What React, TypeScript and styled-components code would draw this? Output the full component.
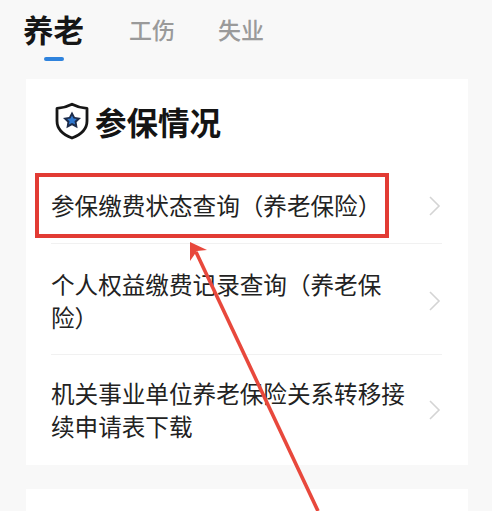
import React from 'react';
import styled, { createGlobalStyle } from 'styled-components';

const GlobalStyle = createGlobalStyle`
  html, body {
    margin: 0;
    padding: 0;
    background: #f8f8f8;
  }
  body {
    font-family: "Noto Sans CJK SC", "Noto Sans", sans-serif;
  }
`;

const Page = styled.div`
  position: relative;
  width: 492px;
  height: 511px;
  overflow: hidden;
  background: #f8f8f8;
  display: flex;
  flex-direction: column;
`;

const Tabs = styled.nav`
  display: flex;
  align-items: flex-start;
  height: 79px;
  flex-shrink: 0;
  padding-left: 23px;
  box-sizing: border-box;
`;

const Tab = styled.div<{ $active?: boolean; $gap: number }>`
  position: relative;
  margin-right: ${(props) => props.$gap}px;
  padding-top: ${(props) => (props.$active ? 7 : 12)}px;
  font-size: ${(props) => (props.$active ? 30.5 : 23)}px;
  line-height: ${(props) => (props.$active ? 44 : 34)}px;
  font-weight: ${(props) => (props.$active ? 700 : 500)};
  color: ${(props) => (props.$active ? '#161616' : '#9a9a9a')};
`;

const TabMarker = styled.span`
  position: absolute;
  left: 21px;
  top: 57px;
  width: 20px;
  height: 4px;
  border-radius: 2px;
  background: #2f83dd;
`;

const Card = styled.section<{ $height?: number }>`
  margin: 0 24px 24px 26px;
  background: #ffffff;
  flex-shrink: 0;
  ${(props) => (props.$height ? `height: ${props.$height}px;` : '')}
`;

const CardHeader = styled.header`
  display: flex;
  align-items: center;
  gap: 6px;
  height: 84px;
  padding: 0 0 5px 29px;
`;

const CardTitle = styled.h2`
  margin: 0;
  font-size: 31.5px;
  line-height: 44px;
  font-weight: 700;
  color: #141414;
`;

const List = styled.div`
  margin-left: 25px;
  margin-right: 26px;
`;

const Row = styled.div<{ $height: number; $nudge?: number; $last?: boolean }>`
  display: flex;
  align-items: center;
  justify-content: space-between;
  height: ${(props) => props.$height}px;
  padding-top: ${(props) => props.$nudge ?? 0}px;
  border-bottom: ${(props) => (props.$last ? 'none' : '1px solid #f1f1f1')};
  box-sizing: border-box;
`;

const RowLabel = styled.div`
  width: 358px;
  font-size: 23.6px;
  line-height: 33px;
  color: #222222;
`;

const Chevron = () => (
  <svg width="14" height="22" viewBox="0 0 14 22" fill="none">
    <path d="M2 2l9 9-9 9" stroke="#d4d4d4" strokeWidth="1.6" />
  </svg>
);

const ShieldIcon = () => (
  <svg width="34" height="38" viewBox="0 0 34 38" fill="none">
    <path
      d="M17 2.2 C22 4.8 27 6 32 6.4 V19 C32 27 25.5 32.8 17 36 C8.5 32.8 2 27 2 19 V6.4 C7 6 12 4.8 17 2.2 Z"
      stroke="#161616"
      strokeWidth="2.8"
      strokeLinejoin="round"
    />
    <path
      d="M17 9.5l2.9 5.6 6.1.9-4.4 4.2 1 6-5.6-2.9-5.6 2.9 1-6-4.4-4.2 6.1-.9z"
      fill="#1d2c4a"
    />
    <path
      d="M17 13.5l1.6 3 3.3.5-2.4 2.3.6 3.2-3.1-1.6-3.1 1.6.6-3.2-2.4-2.3 3.3-.5z"
      fill="#2f78cf"
    />
  </svg>
);

const Highlight = styled.div`
  position: absolute;
  left: 35px;
  top: 173px;
  width: 354px;
  height: 65px;
  box-sizing: border-box;
  border: 4px solid #e23b34;
`;

const ArrowLayer = styled.svg`
  position: absolute;
  left: 0;
  top: 0;
  pointer-events: none;
`;

const rows = [
  { label: '参保缴费状态查询（养老保险）', height: 76 },
  { label: '个人权益缴费记录查询（养老保险）', height: 111, nudge: 3 },
  { label: '机关事业单位养老保险关系转移接续申请表下载', height: 110, last: true },
];

const App: React.FC = () => {
  return (
    <Page>
      <GlobalStyle />
      <Tabs>
        <Tab $active $gap={45}>
          养老
          <TabMarker />
        </Tab>
        <Tab $gap={43}>工伤</Tab>
        <Tab $gap={0}>失业</Tab>
      </Tabs>

      <Card>
        <CardHeader>
          <ShieldIcon />
          <CardTitle>参保情况</CardTitle>
        </CardHeader>
        <List>
          {rows.map((row) => (
            <Row key={row.label} $height={row.height} $nudge={row.nudge} $last={row.last}>
              <RowLabel>{row.label}</RowLabel>
              <Chevron />
            </Row>
          ))}
        </List>
      </Card>

      <Card $height={40} />

      <Highlight />
      <ArrowLayer width="492" height="511" viewBox="0 0 492 511">
        <path d="M318 511 L196 252" stroke="#e8483c" strokeWidth="3.6" />
        <path d="M190 242 L190 261 L197 251 L207 250 Z" fill="#e8483c" />
      </ArrowLayer>
    </Page>
  );
};

export default App;
